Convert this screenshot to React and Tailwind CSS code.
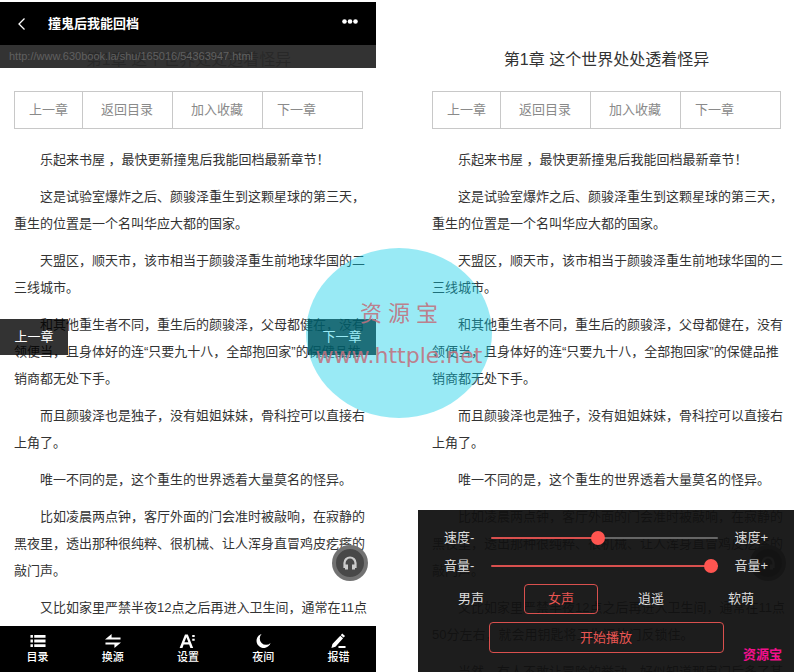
import { useState } from "react";

const paragraphs = [
  "乐起来书屋 ，最快更新撞鬼后我能回档最新章节！",
  "这是试验室爆炸之后、颜骏泽重生到这颗星球的第三天，重生的位置是一个名叫华应大都的国家。",
  "天盟区，顺天市，该市相当于颜骏泽重生前地球华国的二三线城市。",
  "和其他重生者不同，重生后的颜骏泽，父母都健在，没有领便当，且身体好的连“只要九十八，全部抱回家”的保健品推销商都无处下手。",
  "而且颜骏泽也是独子，没有姐姐妹妹，骨科控可以直接右上角了。",
  "唯一不同的是，这个重生的世界透着大量莫名的怪异。",
  "比如凌晨两点钟，客厅外面的门会准时被敲响，在寂静的黑夜里，透出那种很纯粹、很机械、让人浑身直冒鸡皮疙瘩的敲门声。",
  "又比如家里严禁半夜12点之后再进入卫生间，通常在11点50分左右，就会用钥匙将卫生间的门反锁住。",
  "当然，有人不敢让冒险的举动，好似知道那扇门后多了某种",
];

const voices = ["男声", "女声", "逍遥", "软萌"];

const tabs = [
  {
    label: "目录",
    icon: (
      <path d="M2 2h2.600v3H2zM6 2h12v3H6zM2 7h2.600v3H2zM6 7h12v3H6zM2 12h2.600v3H2zM6 12h12v3H6z" />
    ),
  },
  {
    label: "换源",
    icon: <path d="M8.500 1v3.800H18v2.200H1.500zM11.500 16v-3.800H2V10h16.500z" />,
  },
  {
    label: "设置",
    icon: (
      <path d="M6.800 1.500h3L15.500 16h-3l-1.300-3.700H5.400L4.100 16h-3zM8.300 4.500L6.200 9.900h4.200zM14.500 2h2.600v2.200h-2.600zM14.500 6h2.600v2.200h-2.600z" />
    ),
  },
  {
    label: "夜间",
    icon: <path d="M8.500 1A7.600 7.600 0 1 0 18 10.500 6.200 6.200 0 0 1 8.500 1z" />,
  },
  {
    label: "报错",
    icon: (
      <path d="M14.500 .5l3 2.600-1.600 1.800-3-2.600zM12.400 2.900l3 2.600-8.100 9.100L3 16l1.100-4.300zM10.500 13.800H18V16h-7.500z" />
    ),
  },
];

function Article() {
  return (
    <article className="pr-[9px] pl-[14px] pt-12 text-[#333]">
      <h1 className="mr-1 text-center text-base leading-6">
        第1章 这个世界处处透着怪异
      </h1>
      <nav className="mt-[19px] mr-1 flex border border-[#c8c8c8] text-[13px] leading-9 text-[#8a8a8a]">
        <a href="#prev" className="border-r border-[#c8c8c8] px-[14px]">
          上一章
        </a>
        <a href="#list" className="border-r border-[#c8c8c8] pr-[19px] pl-[18px]">
          返回目录
        </a>
        <a href="#save" className="border-r border-[#c8c8c8] pr-[19px] pl-[18px]">
          加入收藏
        </a>
        <a href="#next" className="flex-1 px-[14px]">
          下一章
        </a>
      </nav>
      <div className="mt-[17px] space-y-[10px] text-[13px] leading-[27px]">
        {paragraphs.map((text) => (
          <p key={text} className="indent-[2em]">
            {text}
          </p>
        ))}
      </div>
    </article>
  );
}

function ListenButton() {
  return (
    <button
      aria-label="听书"
      className="absolute top-[545px] right-2 flex size-9 items-center justify-center rounded-full border-4 border-[#777]/90 bg-[#484848]"
    >
      <svg viewBox="0 0 16 16" className="size-4" fill="none" stroke="#ccc">
        <path d="M2.500 13V8a5.500 5.500 0 0 1 11 0v5" strokeWidth="2.200" />
        <path d="M4.500 9.500v5M11.500 9.500v5" strokeWidth="3" />
      </svg>
    </button>
  );
}

function Slider({ name, value, onChange }) {
  return (
    <div className="flex h-7 items-center">
      <span className="w-[47px]">{name}-</span>
      <input
        type="range"
        aria-label={name}
        min="0"
        max="100"
        value={value}
        onChange={(e) => onChange(Number(e.target.value))}
        style={{
          backgroundImage: `linear-gradient(to right, #d9504e ${value}%, #666 ${value}%)`,
        }}
        className="h-[2px] min-w-0 flex-1 appearance-none rounded-full [&::-webkit-slider-thumb]:size-[14px] [&::-webkit-slider-thumb]:appearance-none [&::-webkit-slider-thumb]:rounded-full [&::-webkit-slider-thumb]:bg-[#ff5550]"
      />
      <span className="w-[50px] text-right">{name}+</span>
    </div>
  );
}

function Reader() {
  return (
    <section className="relative h-screen overflow-hidden">
      <Article />
      <header className="absolute inset-x-0 top-[2px]">
        <div className="flex h-[43px] items-center bg-black pr-[18px] pl-[14px] text-white">
          <button aria-label="返回" className="w-[34px]">
            <svg viewBox="0 0 16 16" className="size-4" fill="none" stroke="white">
              <path d="M10.500 2.500L5 8l5.500 5.500" strokeWidth="1.300" />
            </svg>
          </button>
          <h2 className="flex-1 text-[13px] font-bold">撞鬼后我能回档</h2>
          <button aria-label="更多">
            <svg viewBox="0 0 16 8" className="mb-1 h-2 w-4" fill="white">
              <circle cx="2.500" cy="3.500" r="2.300" />
              <circle cx="8" cy="3.500" r="2.300" />
              <circle cx="13.500" cy="3.500" r="2.300" />
            </svg>
          </button>
        </div>
        <p className="truncate bg-[#282828]/95 px-[9px] text-[11px] leading-[23px] text-[#606060]">
          http://www.630book.la/shu/165016/54363947.html
        </p>
      </header>
      <button className="absolute top-[319px] left-0 h-9 w-[68px] bg-black/80 text-[13px] text-white">
        上一章
      </button>
      <button className="absolute top-[319px] right-0 h-9 w-[68px] bg-black/80 text-[13px] text-white">
        下一章
      </button>
      <ListenButton />
      <footer className="absolute inset-x-0 bottom-0 flex h-[46px] bg-black text-white">
        {tabs.map((tab) => (
          <button
            key={tab.label}
            className="flex flex-1 flex-col items-center pt-[7px] text-[11px] leading-4 font-medium"
          >
            <svg viewBox="0 0 20 17" className="h-4 w-5" fill="currentColor">
              {tab.icon}
            </svg>
            {tab.label}
          </button>
        ))}
      </footer>
    </section>
  );
}

function Listener() {
  const [speed, setSpeed] = useState(47);
  const [volume, setVolume] = useState(100);
  const [voice, setVoice] = useState("女声");

  return (
    <section className="relative h-screen overflow-hidden">
      <Article />
      <ListenButton />
      <div className="absolute inset-x-0 bottom-0 h-[162px] bg-[#111]/95 px-2 pt-[14px] text-[13px] text-[#ddd]">
        <div className="px-[18px]">
          <Slider name="速度" value={speed} onChange={setSpeed} />
          <Slider name="音量" value={volume} onChange={setVolume} />
        </div>
        <div className="mt-1 grid grid-cols-4">
          {voices.map((v) => (
            <button
              key={v}
              onClick={() => setVoice(v)}
              className={
                v === voice
                  ? "mx-2 h-[30px] rounded border border-[#d9504e] text-[#e85552]"
                  : "mx-2 h-[30px] rounded border border-transparent"
              }
            >
              {v}
            </button>
          ))}
        </div>
        <button className="mx-auto mt-2 block h-[31px] w-[235px] rounded border border-[#d9504e] text-[#e85552]">
          开始播放
        </button>
      </div>
      <span className="absolute right-3 bottom-2 text-[13px] font-bold text-[#f2108c]">
        资源宝
      </span>
    </section>
  );
}

export default function App() {
  return (
    <main className="relative grid grid-cols-2 gap-x-[42px] bg-white font-['Liberation_Sans','Noto_Sans_CJK_SC',sans-serif]">
      <Reader />
      <Listener />
      {/* watermark */}
      <div className="pointer-events-none absolute inset-x-0 top-[248px] flex justify-center pl-1">
        <div className="flex h-[170px] w-[186px] flex-col items-center rounded-[50%] bg-[#00cae6]/40 pt-[50px] text-[#c0727f]/90">
          <span className="text-[22px] leading-8">资 源 宝</span>
          <span className="mt-2 font-['DejaVu_Sans',sans-serif] text-[22px] leading-9">
            www.httple.net
          </span>
        </div>
      </div>
    </main>
  );
}
